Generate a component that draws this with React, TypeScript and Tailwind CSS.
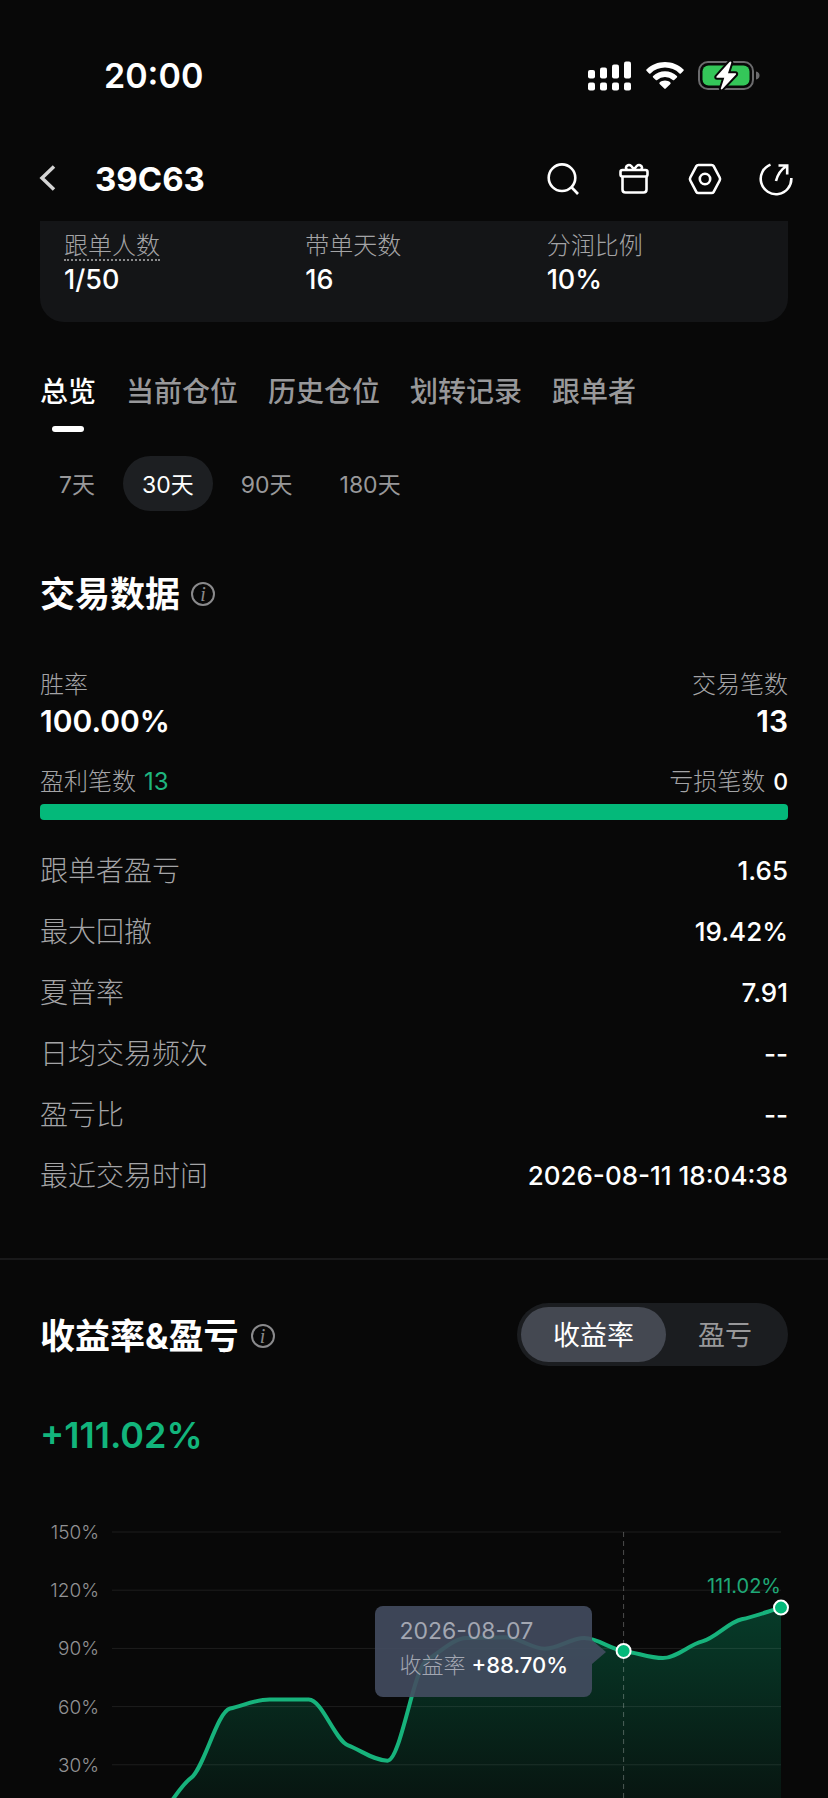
import { useState } from "react";
import type { ReactNode } from "react";

const TABS = ["总览", "当前仓位", "历史仓位", "划转记录", "跟单者"];
const PERIODS = ["7天", "30天", "90天", "180天"];

const METRICS = [
  { label: "跟单者盈亏", value: "1.65" },
  { label: "最大回撤", value: "19.42%" },
  { label: "夏普率", value: "7.91" },
  { label: "日均交易频次", value: "--" },
  { label: "盈亏比", value: "--" },
  { label: "最近交易时间", value: "2026-08-11 18:04:38" },
];

// daily return in percent, last entry is today
const RETURNS = [
  0, 2, 23.1, 59, 63.7, 63.7, 40, 32.1, 84, 95.3, 95.8, 89.8, 95.3, 88.7, 85,
  93.6, 105, 111.02,
];
const ACTIVE_INDEX = 13;

export default function App() {
  return (
    <div className="h-screen overflow-hidden bg-[#080808] text-white font-['Inter','Noto_Sans_CJK_SC',sans-serif]">
      <StatusBar />
      <Header />
      <main>
        <SummaryCard />
        <Tabs />
        <TradeData />
        <hr className="mt-[52px] border-0 h-0.5 bg-[#19191a]" />
        <Returns />
      </main>
    </div>
  );
}

function StatusBar() {
  return (
    <div className="h-[152px] flex items-center justify-between pl-[104px] pr-[68px]">
      <span className="text-[34px] leading-10 font-semibold">20:00</span>
      <div className="flex items-center gap-3.5">
        <svg width="44" height="30" viewBox="0 0 44 30" fill="#fff" aria-hidden="true">
          <rect x="0" y="9" width="7" height="8.5" rx="2" />
          <rect x="12" y="6.5" width="7" height="11" rx="2" />
          <rect x="24" y="3.5" width="7" height="14" rx="2" />
          <rect x="36" y="0.5" width="7" height="17" rx="2" />
          <rect x="0" y="21.5" width="7" height="8" rx="2" />
          <rect x="12" y="21.5" width="7" height="8" rx="2" />
          <rect x="24" y="21.5" width="7" height="8" rx="2" />
          <rect x="36" y="21.5" width="7" height="8" rx="2" />
        </svg>
        <svg width="38" height="28" viewBox="0 0 38 28" fill="#fff" aria-hidden="true">
          <path d="M19 0C26 0 32.600 2.700 37.500 7.400Q38.200 8.100 37.500 8.800L34.900 11.400Q34.200 12 33.500 11.400A21 21 0 0 0 4.500 11.400Q3.800 12 3.100 11.400L.5 8.800Q-.2 8.100 .5 7.400C5.400 2.700 12 0 19 0Z" />
          <path d="M19 9.300C23.500 9.300 27.700 11 30.900 14Q31.600 14.700 30.900 15.400L28.200 18Q27.500 18.600 26.800 18A11.600 11.600 0 0 0 11.200 18Q10.500 18.600 9.800 18L7.100 15.400Q6.400 14.700 7.100 14C10.300 11 14.500 9.300 19 9.300Z" />
          <path d="M19 18.600C21 18.600 22.900 19.300 24.400 20.500Q25 21.200 24.400 21.900L19.700 26.600Q19 27.300 18.300 26.600L13.600 21.900Q13 21.200 13.600 20.500C15.100 19.300 17 18.600 19 18.600Z" />
        </svg>
        <svg width="62" height="32" viewBox="0 0 62 32" aria-hidden="true">
          <rect x="1" y="2" width="54" height="27" rx="9" fill="none" stroke="#6b6b6d" strokeWidth="2" />
          <path d="M58 11.500C60.500 12 61.500 13.500 61.500 15.500S60.500 19 58 19.500Z" fill="#6b6b6d" />
          <rect x="4.500" y="5.500" width="47" height="20" rx="6" fill="#34c759" />
          <path
            d="M31.500 2 18.500 16.500Q17.800 17.800 19.200 17.800H26.300L22.800 28.500Q23 30 24.400 29L38 14.600Q38.600 13.200 37.200 13.200H30L33.400 2.600Q33 .9 31.500 2Z"
            fill="#fff"
            stroke="#080808"
            strokeWidth="4"
            strokeLinejoin="round"
            paintOrder="stroke"
          />
        </svg>
      </div>
    </div>
  );
}

function Header() {
  return (
    <header className="h-[54px] mb-[15px] flex items-center pl-[39px] pr-[34px]">
      <button aria-label="返回">
        <svg width="17" height="28" viewBox="0 0 17 28" fill="none" stroke="#d4d4d4" strokeWidth="3.500">
          <path d="M15 1.500 3 13 15 24.500" />
        </svg>
      </button>
      <h1 className="ml-[39px] flex-1 text-[33px] leading-10 font-bold">39C63</h1>
      <div className="flex gap-[35px]">
        <IconButton label="搜索">
          <circle cx="17" cy="16.700" r="13.300" />
          <path d="M26.300 26 33 33" />
        </IconButton>
        <IconButton label="礼物">
          <rect x="4.500" y="9" width="27" height="6.500" rx="2" />
          <path d="M6.500 15.500V28.500Q6.500 31.500 9.500 31.500H27.500Q30.500 31.500 30.500 28.500V15.500" />
          <path d="M18 9C16 5 14 3.500 12 4.200C9.500 5.200 9.500 7.500 11 9M18 9C20 5 22 3.500 24 4.200C26.500 5.200 26.500 7.500 25 9" />
        </IconButton>
        <IconButton label="设置">
          <path d="M11.500 4H24.500Q26 4 26.800 5.300L32.700 16.500Q33.500 18 32.700 19.500L26.800 30.700Q26 32 24.500 32H11.500Q10 32 9.200 30.700L3.300 19.500Q2.500 18 3.300 16.500L9.200 5.300Q10 4 11.500 4Z" />
          <circle cx="18" cy="18" r="5.200" />
        </IconButton>
        <IconButton label="分享">
          <path d="M12.500 3.600A15.300 15.300 0 1 0 33.300 17" />
          <path d="M18 20C19.500 14 23 8.500 28.500 5M20.500 4.500H29.200V13.500" />
        </IconButton>
      </div>
    </header>
  );
}

function IconButton({ label, children }: { label: string; children: ReactNode }) {
  return (
    <button aria-label={label} className="size-9">
      <svg width="36" height="36" viewBox="0 0 36 36" fill="none" stroke="#fff" strokeWidth="2.600">
        {children}
      </svg>
    </button>
  );
}

function SummaryCard() {
  return (
    <dl className="mx-10 pt-2 pb-6 pl-6 grid grid-cols-3 rounded-b-3xl bg-[#141517]">
      <SummaryItem label="跟单人数" value="1/50" hint />
      <SummaryItem label="带单天数" value="16" />
      <SummaryItem label="分润比例" value="10%" />
    </dl>
  );
}

function SummaryItem({ label, value, hint }: { label: string; value: string; hint?: boolean }) {
  return (
    <div>
      <dt className="h-8 text-2xl leading-[34px] font-light text-[#a4a4a6]">
        <span className={hint ? "inline-block h-8 border-b-2 border-dotted border-[#8a8a8c]" : ""}>
          {label}
        </span>
      </dt>
      <dd className="mt-px text-[27px] leading-9 font-medium">{value}</dd>
    </div>
  );
}

function Tabs() {
  const [tab, setTab] = useState(TABS[0]);
  const [period, setPeriod] = useState("30天");

  return (
    <>
      <nav className="mt-[50px] px-10 flex gap-[30px]">
        {TABS.map((t) => (
          <button
            key={t}
            onClick={() => setTab(t)}
            className={`flex flex-col items-center text-[28px] leading-10 font-medium ${
              t === tab ? "text-white" : "text-[#98989a]"
            }`}
          >
            {t}
            {t === tab && <span className="mt-3.5 w-8 h-1.5 rounded-full bg-white" />}
          </button>
        ))}
      </nav>
      <div className="mt-6 px-10 flex gap-[9px]">
        {PERIODS.map((p) => (
          <button
            key={p}
            onClick={() => setPeriod(p)}
            className={`h-[55px] px-[19px] pt-1 rounded-full text-[23px] ${
              p === period ? "bg-[#1d1f22] text-white" : "text-[#98989a]"
            }`}
          >
            {p}
          </button>
        ))}
      </div>
    </>
  );
}

function InfoButton() {
  return (
    <button
      aria-label="说明"
      className="size-6 rounded-full border-2 border-[#8a8a8c] text-[#8a8a8c] flex items-center justify-center font-['Liberation_Serif',serif] italic text-xl leading-5"
    >
      i
    </button>
  );
}

function TradeData() {
  return (
    <section className="mt-[59px] px-10">
      <div className="flex items-center gap-[11px]">
        <h2 className="text-[35px] leading-12 font-bold">交易数据</h2>
        <InfoButton />
      </div>

      <div className="mt-[51px] flex justify-between">
        <div>
          <div className="text-2xl leading-8 font-light text-[#a4a4a6]">胜率</div>
          <div className="text-[30px] leading-10 font-semibold">100.00%</div>
        </div>
        <div className="text-right">
          <div className="text-2xl leading-8 font-light text-[#a4a4a6]">交易笔数</div>
          <div className="text-[30px] leading-10 font-semibold">13</div>
        </div>
      </div>

      <div className="mt-[25px] flex justify-between text-2xl leading-8 font-light text-[#a4a4a6]">
        <div className="flex gap-2">
          盈利笔数 <span className="font-normal text-[#1fb57f]">13</span>
        </div>
        <div className="flex gap-2">
          亏损笔数 <span className="text-[23px] font-medium text-white">0</span>
        </div>
      </div>
      <div className="mt-1.5 h-4 rounded bg-[#04b97a]" />

      <dl className="mt-5">
        {METRICS.map((m) => (
          <div key={m.label} className="h-[61px] flex items-center justify-between">
            <dt className="text-[28px] font-light text-[#a4a4a6]">{m.label}</dt>
            <dd className="text-[26px] font-medium">{m.value}</dd>
          </div>
        ))}
      </dl>
    </section>
  );
}

function Returns() {
  const [mode, setMode] = useState("收益率");

  return (
    <section className="mt-[43px] px-10">
      <div className="flex items-center justify-between">
        <div className="pt-0.5 flex items-center gap-3">
          <h2 className="text-[35px] leading-12 font-bold">收益率&amp;盈亏</h2>
          <InfoButton />
        </div>
        <div className="h-[63px] p-1 flex rounded-full bg-[#1b1d20]">
          {["收益率", "盈亏"].map((m) => (
            <button
              key={m}
              onClick={() => setMode(m)}
              className={`px-8 pt-0.5 rounded-full text-[27px] leading-10 ${
                m === mode ? "bg-[#444851] text-white" : "text-[#98989a]"
              }`}
            >
              {m}
            </button>
          ))}
        </div>
      </div>
      <div className="mt-[45px] text-[36px] leading-12 font-semibold text-[#12b57c]">+111.02%</div>
      <ReturnChart />
    </section>
  );
}

const LEFT = 72;
const RIGHT = 741;
const TOP = 17;
const STEP = 58.2;
const BASE = TOP + STEP * 5;

const points = RETURNS.map((v, i) => ({
  x: RIGHT - (RETURNS.length - 1 - i) * 39.35,
  y: BASE - (v / 30) * STEP,
}));

function ReturnChart() {
  const line = monotonePath(points);
  const last = points[points.length - 1];
  const active = points[ACTIVE_INDEX];

  return (
    <div className="relative mt-14">
      <svg viewBox="0 0 748 340" className="w-full overflow-visible" role="img" aria-label="收益率走势">
        <defs>
          <linearGradient id="area" x1="0" y1={last.y} x2="0" y2={BASE} gradientUnits="userSpaceOnUse">
            <stop offset="0" stopColor="#04b97a" stopOpacity="0.29" />
            <stop offset="1" stopColor="#04b97a" stopOpacity="0.05" />
          </linearGradient>
        </defs>
        <path d={`${line}L${last.x},${BASE}L${points[0].x},${BASE}Z`} fill="url(#area)" />
        {[150, 120, 90, 60, 30].map((tick, i) => (
          <g key={tick}>
            <line x1={LEFT} x2={RIGHT} y1={TOP + i * STEP} y2={TOP + i * STEP} stroke="#fff" strokeOpacity="0.090" />
            <text x="59" y={TOP + 7 + i * STEP} textAnchor="end" fontSize="19" fontWeight="300" fill="#929294">
              {tick}%
            </text>
          </g>
        ))}
        <line x1={active.x} x2={active.x} y1={TOP} y2={BASE} stroke="#fff" strokeOpacity="0.280" strokeDasharray="5 4" />
        <path d={line} fill="none" stroke="#17b37c" strokeWidth="4" strokeLinejoin="round" />
        <text x={last.x} y="78" textAnchor="end" fontSize="20" fill="#1fa877">
          111.02%
        </text>
        {[active, last].map((p) => (
          <circle key={p.x} cx={p.x} cy={p.y} r="7" fill="#04b97a" stroke="#fff" strokeWidth="2" />
        ))}
      </svg>

      <div className="absolute top-[91px] right-[26.200%] h-[91px] px-6 pt-2 flex flex-col rounded-lg bg-[#444c60]/90 text-[22px] leading-[34px] text-[#a3a7b2]">
        <span className="text-[23px]">2026-08-07</span>
        <span className="font-light whitespace-nowrap">
          收益率 <b className="font-medium text-white">+88.70%</b>
        </span>
        <svg
          width="14"
          height="24"
          viewBox="0 0 14 24"
          className="absolute left-full top-[34px] fill-[#444c60]/90"
          aria-hidden="true"
        >
          <path d="M0 0 14 12 0 24Z" />
        </svg>
      </div>
    </div>
  );
}

// monotone cubic through the points, so that flat stretches do not overshoot
function monotonePath(pts: { x: number; y: number }[]): string {
  const slope = (i: number) => (pts[i + 1].y - pts[i].y) / (pts[i + 1].x - pts[i].x);
  const tangents = pts.map((_, i) => {
    if (i === 0) return slope(0);
    if (i === pts.length - 1) return slope(i - 1);
    const a = slope(i - 1);
    const b = slope(i);
    if (a * b <= 0) return 0;
    return Math.sign(a) * Math.min(Math.abs(a), Math.abs(b), Math.abs(a + b) / 4);
  });

  let d = `M${pts[0].x},${pts[0].y}`;
  for (let i = 1; i < pts.length; i++) {
    const p = pts[i - 1];
    const q = pts[i];
    const h = (q.x - p.x) / 3;
    d += `C${p.x + h},${p.y + h * tangents[i - 1]} ${q.x - h},${q.y - h * tangents[i]} ${q.x},${q.y}`;
  }
  return d;
}
